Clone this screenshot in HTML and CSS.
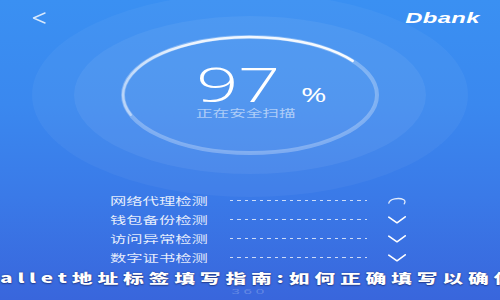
FILE: index.html
```html
<!DOCTYPE html>
<html lang="zh-CN">
<head>
<meta charset="utf-8">
<title>Dbank 安全扫描</title>
<link rel="stylesheet" href="styles.css">
</head>
<body>
<div class="screen">
  <svg class="rings" width="500" height="300" viewBox="0 0 500 300" aria-hidden="true">
    <defs>
      <linearGradient id="arcfade" x1="130" y1="115" x2="350" y2="60" gradientUnits="userSpaceOnUse">
        <stop offset="0" stop-color="#ffffff" stop-opacity="0.45"/>
        <stop offset="0.3" stop-color="#ffffff" stop-opacity="0.85"/>
        <stop offset="1" stop-color="#ffffff" stop-opacity="0.95"/>
      </linearGradient>
    </defs>
    <ellipse cx="250" cy="95" rx="218" ry="102" fill="#ffffff" fill-opacity="0.045"/>
    <ellipse cx="250" cy="95" rx="176" ry="79" fill="#ffffff" fill-opacity="0.06"/>
    <ellipse cx="250" cy="95" rx="127" ry="58" fill="#ffffff" fill-opacity="0.03" stroke="#ffffff" stroke-opacity="0.28" stroke-width="4"/>
    <path d="M130.7,114.8 A127 58 0 0 1 352.7,60.9" fill="none" stroke="url(#arcfade)" stroke-width="2.5" stroke-linecap="round"/>
  </svg>

  <header class="topbar">
    <svg class="back" width="14" height="12" viewBox="0 0 14 12" aria-hidden="true">
      <polyline points="13,1 1.5,6 13,11" fill="none" stroke="#ffffff" stroke-opacity="0.8" stroke-width="1.4" stroke-linejoin="round" stroke-linecap="round"/>
    </svg>
    <span class="brand">Dbank</span>
  </header>

  <section class="gauge">
    <div class="gauge-inner">
      <div class="score"><span class="num">97</span><span class="pct">%</span></div>
      <div class="status">正在安全扫描</div>
    </div>
  </section>

  <ul class="checks">
    <li class="check">
      <span class="label"><span class="label-text">网络代理检测</span></span>
      <span class="dots"></span>
      <svg class="icon" width="18" height="8" viewBox="0 0 18 8" aria-hidden="true">
        <path d="M0.8,6.2 C1.5,1.8 11,0.2 15.8,2.8 C17.4,3.8 17.2,5.6 16.2,6.8" fill="none" stroke="#ffffff" stroke-opacity="0.85" stroke-width="1.3" stroke-linecap="round"/>
      </svg>
    </li>
    <li class="check">
      <span class="label"><span class="label-text">钱包备份检测</span></span>
      <span class="dots"></span>
      <svg class="icon" width="18" height="8" viewBox="0 0 18 8" aria-hidden="true">
        <polyline points="0.8,1.2 9,6.8 17.2,0.8" fill="none" stroke="#ffffff" stroke-width="1.6" stroke-linecap="round" stroke-linejoin="round"/>
      </svg>
    </li>
    <li class="check">
      <span class="label"><span class="label-text">访问异常检测</span></span>
      <span class="dots"></span>
      <svg class="icon" width="18" height="8" viewBox="0 0 18 8" aria-hidden="true">
        <polyline points="0.8,1.2 9,6.8 17.2,0.8" fill="none" stroke="#ffffff" stroke-width="1.6" stroke-linecap="round" stroke-linejoin="round"/>
      </svg>
    </li>
    <li class="check">
      <span class="label"><span class="label-text">数字证书检测</span></span>
      <span class="dots"></span>
      <svg class="icon" width="18" height="8" viewBox="0 0 18 8" aria-hidden="true">
        <polyline points="0.8,1.2 9,6.8 17.2,0.8" fill="none" stroke="#ffffff" stroke-width="1.6" stroke-linecap="round" stroke-linejoin="round"/>
      </svg>
    </li>
  </ul>

  <div class="mark"><span class="mark-text">360</span></div>

  <div class="headline"><span class="headline-text">allet地址标签填写指南:如何正确填写以确保</span></div>
</div>
</body>
</html>
```

FILE: styles.css
```css
html, body {
  margin: 0;
  padding: 0;
}

body {
  width: 500px;
  height: 300px;
  overflow: hidden;
  font-family: "Noto Sans CJK SC", "Noto Sans", sans-serif;
}

.screen {
  position: relative;
  width: 500px;
  height: 300px;
  overflow: hidden;
  display: flex;
  flex-direction: column;
  background: linear-gradient(180deg, #3a90f2 0%, #3a88ef 35%, #3a7ae8 65%, #3966dc 100%);
  color: #ffffff;
}

.rings {
  position: absolute;
  left: 0;
  top: 0;
  z-index: 0;
}

.topbar,
.gauge,
.checks,
.mark {
  position: relative;
  z-index: 1;
}

.topbar {
  height: 36px;
  display: flex;
  align-items: center;
  justify-content: space-between;
  padding: 0 20px 0 32px;
  flex: none;
}

.back {
  display: block;
}

.brand {
  display: inline-block;
  font-family: "Liberation Sans", Arial, sans-serif;
  font-weight: bold;
  font-style: italic;
  font-size: 14px;
  line-height: 16px;
  transform: scaleX(1.7);
  transform-origin: right center;
  letter-spacing: 0.2px;
}

.gauge {
  margin-top: 24px;
  padding-left: 196px;
  height: 58px;
  flex: none;
}

.gauge-inner {
  transform: scaleX(1.55);
  transform-origin: 0 0;
}

.score {
  display: flex;
  align-items: baseline;
  height: 42px;
  padding-top: 5px;
  white-space: nowrap;
}

.num {
  font-family: "Open Sans", "Noto Sans", sans-serif;
  font-weight: 300;
  font-size: 48px;
  line-height: 38px;
  letter-spacing: -0.5px;
}

.pct {
  font-family: "Open Sans", "Noto Sans", sans-serif;
  font-weight: 400;
  font-size: 20px;
  line-height: 16px;
  margin-left: 14px;
}

.status {
  font-size: 10px;
  line-height: 11px;
  color: rgba(255, 255, 255, 0.55);
  white-space: nowrap;
  transform: scaleX(1.07);
  transform-origin: 0 0;
}

.checks {
  list-style: none;
  margin: 73px 0 0;
  padding: 0 0 0 110px;
  height: 76px;
  flex: none;
}

.check {
  display: flex;
  align-items: center;
  height: 19px;
}

.label {
  width: 120px;
  height: 12px;
  flex: none;
  display: flex;
  align-items: center;
}

.label-text {
  display: inline-block;
  font-size: 10px;
  line-height: 12px;
  color: rgba(255, 255, 255, 0.88);
  white-space: nowrap;
  transform: scaleX(1.63);
  transform-origin: 0 50%;
}

.dots {
  width: 137px;
  height: 1px;
  flex: none;
  margin-right: 21px;
  background: repeating-linear-gradient(90deg, rgba(255, 255, 255, 0.75) 0 3.5px, transparent 3.5px 7.5px);
}

.icon {
  display: block;
  flex: none;
}

.mark {
  margin-top: 19px;
  text-align: center;
  height: 9px;
  line-height: 9px;
  font-size: 8px;
}

.mark-text {
  display: inline-block;
  font-family: "Liberation Sans", Arial, sans-serif;
  font-size: 8px;
  line-height: 9px;
  letter-spacing: 2px;
  color: rgba(255, 255, 255, 0.22);
  transform: scaleX(1.9);
}

.headline {
  position: absolute;
  left: 0;
  top: 264px;
  z-index: 2;
  white-space: nowrap;
}

.headline-text {
  display: inline-block;
  font-family: "Noto Sans CJK SC", "Noto Sans", sans-serif;
  font-weight: 900;
  font-size: 13px;
  line-height: 15px;
  letter-spacing: 3px;
  color: #ffffff;
  text-shadow: 0 0 1px rgba(20, 30, 90, 0.8), 0 1px 1px rgba(20, 30, 90, 0.5);
  transform: scaleX(1.6);
  transform-origin: 0 0;
}
```
